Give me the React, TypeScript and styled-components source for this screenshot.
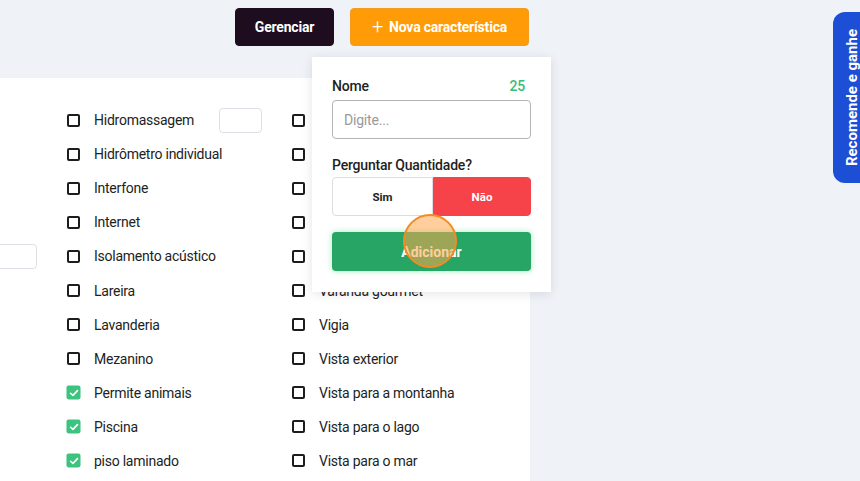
import React from "react";
import styled, { createGlobalStyle } from "styled-components";

const GlobalStyle = createGlobalStyle`
  html, body { margin: 0; padding: 0; }
  body {
    background: #eff2f7;
    font-family: Roboto, "Liberation Sans", Arial, sans-serif;
    overflow: hidden;
    color: #1f1c1f;
  }
  * { box-sizing: border-box; }
`;

const Page = styled.div`
  position: relative;
  width: 860px;
  height: 481px;
  overflow: hidden;
  display: flex;
  flex-direction: column;
`;

const TopBar = styled.div`
  height: 78px;
  flex: none;
  display: flex;
  align-items: flex-start;
  gap: 16px;
  padding: 8px 0 0 235px;
`;

const Button = styled.button<{ $variant: "dark" | "orange" }>`
  height: 38px;
  border-radius: 4px;
  font-family: inherit;
  font-size: 14px;
  font-weight: 700;
  letter-spacing: -0.2px;
  color: #fff;
  display: flex;
  align-items: center;
  justify-content: center;
  gap: 6px;
  cursor: pointer;
  border: 1px solid ${(p) => (p.$variant === "dark" ? "#1e0d1f" : "#f49a1e")};
  background: ${(p) => (p.$variant === "dark" ? "#1e0d1f" : "#ff9b07")};
  width: ${(p) => (p.$variant === "dark" ? "99px" : "179px")};
`;

const Plus = styled.span`
  font-size: 20px;
  font-weight: 300;
  line-height: 1;
  margin-top: -2px;
`;

const Body = styled.div`
  flex: 1;
  display: flex;
  min-height: 0;
`;

const Panel = styled.div`
  width: 530px;
  background: #fff;
  overflow: hidden;
  padding-top: 25px;
`;

const Grid = styled.div`
  margin-left: -158px;
  display: grid;
  grid-template-columns: repeat(3, 225px);
  grid-auto-flow: column;
  grid-template-rows: repeat(11, 34.1px);
`;

const Item = styled.div`
  display: grid;
  grid-template-columns: 13px 139px 43px;
  align-items: center;
  height: 34.1px;
`;

const Box = styled.span<{ $checked?: boolean }>`
  width: 13px;
  height: 13px;
  border-radius: 2px;
  border: ${(p) => (p.$checked ? "none" : "2px solid #1f1c1f")};
  background: ${(p) => (p.$checked ? "#3cc47f" : "#fff")};
  display: flex;
  align-items: center;
  justify-content: center;
  transform: ${(p) => (p.$checked ? "scale(1.08)" : "none")};
`;

const Label = styled.span`
  padding-left: 14px;
  font-size: 14px;
  letter-spacing: -0.25px;
  color: #221e22;
  white-space: nowrap;
`;

const Qty = styled.span`
  width: 43px;
  height: 25px;
  border: 1px solid #dcdfe4;
  border-radius: 4px;
  background: #fff;
`;

const Popover = styled.div`
  position: absolute;
  left: 312px;
  top: 57px;
  width: 239px;
  height: 235px;
  background: #fff;
  box-shadow: 0 2px 10px rgba(30, 40, 60, 0.12);
  padding: 20px;
  display: flex;
  flex-direction: column;
`;

const FieldHead = styled.div`
  display: flex;
  justify-content: space-between;
  align-items: center;
  height: 18px;
  font-size: 14px;
  letter-spacing: -0.2px;
  font-weight: 500;
  color: #221e22;
`;

const Count = styled.span`
  color: #38bd78;
  font-weight: 500;
  font-size: 14px;
  padding-right: 6px;
`;

const Input = styled.div`
  margin-top: 5px;
  height: 39px;
  border: 1px solid #b4b4b8;
  border-radius: 4px;
  display: flex;
  align-items: center;
  padding-left: 11px;
  font-size: 14px;
  letter-spacing: -0.2px;
  color: #9a9a9e;
`;

const Question = styled.div`
  margin-top: 17px;
  height: 18px;
  font-size: 14px;
  letter-spacing: -0.2px;
  font-weight: 500;
  color: #221e22;
  display: flex;
  align-items: center;
`;

const Toggle = styled.div`
  margin-top: 3px;
  height: 39px;
  display: grid;
  grid-template-columns: 101px 1fr;
`;

const ToggleOpt = styled.div<{ $active?: boolean }>`
  display: flex;
  align-items: center;
  justify-content: center;
  font-size: 11.5px;
  font-weight: 700;
  color: ${(p) => (p.$active ? "#fff" : "#221e22")};
  background: ${(p) => (p.$active ? "#f6434a" : "#fff")};
  border: 1px solid ${(p) => (p.$active ? "#f6434a" : "#dcdde0")};
  border-radius: ${(p) => (p.$active ? "0 4px 4px 0" : "4px 0 0 4px")};
`;

const AddButton = styled.div`
  margin-top: 16px;
  height: 39px;
  border-radius: 4px;
  background: #26a564;
  box-shadow: 0 0 6px rgba(60, 210, 120, 0.45);
  color: #fff;
  font-size: 14px;
  font-weight: 700;
  display: flex;
  align-items: center;
  justify-content: center;
`;

const Cursor = styled.div`
  position: absolute;
  left: 403px;
  top: 214px;
  width: 54px;
  height: 54px;
  border-radius: 50%;
  background: rgba(255, 166, 74, 0.55);
  border: 2px solid #f28b25;
`;

const ReferTab = styled.div`
  position: absolute;
  left: 833px;
  top: 12px;
  width: 40px;
  height: 171px;
  background: #1c4fd6;
  border-radius: 12px 0 0 12px;
  display: flex;
  align-items: center;
  padding-left: 12px;
`;

const ReferText = styled.span`
  writing-mode: vertical-rl;
  transform: rotate(180deg);
  color: #fff;
  font-size: 15px;
  font-weight: 700;
  line-height: 15px;
  white-space: nowrap;
`;

type Feature = { label: string; checked?: boolean; qty?: boolean };

const hiddenColumn: Feature[] = Array.from({ length: 11 }, (_, i) => ({
  label: "",
  qty: i === 4,
}));

const columns: Feature[][] = [
  hiddenColumn,
  [
    { label: "Hidromassagem", qty: true },
    { label: "Hidrômetro individual" },
    { label: "Interfone" },
    { label: "Internet" },
    { label: "Isolamento acústico" },
    { label: "Lareira" },
    { label: "Lavanderia" },
    { label: "Mezanino" },
    { label: "Permite animais", checked: true },
    { label: "Piscina", checked: true },
    { label: "piso laminado", checked: true },
  ],
  [
    { label: "Playground" },
    { label: "Portaria" },
    { label: "Quintal" },
    { label: "Sauna" },
    { label: "Terraço" },
    { label: "Varanda gourmet" },
    { label: "Vigia" },
    { label: "Vista exterior" },
    { label: "Vista para a montanha" },
    { label: "Vista para o lago" },
    { label: "Vista para o mar" },
  ],
];

const Check = () => (
  <svg width="10" height="10" viewBox="0 0 10 10" fill="none">
    <path d="M1.8 5.2 L4 7.2 L8.2 2.8" stroke="#fff" strokeWidth="1.5" strokeLinecap="round" strokeLinejoin="round" />
  </svg>
);

export default function App() {
  return (
    <Page>
      <GlobalStyle />
      <TopBar>
        <Button $variant="dark">Gerenciar</Button>
        <Button $variant="orange">
          <Plus>+</Plus>
          Nova característica
        </Button>
      </TopBar>
      <Body>
        <Panel>
          <Grid>
            {columns.flat().map((f, i) => (
              <Item key={i}>
                <Box $checked={f.checked}>{f.checked && <Check />}</Box>
                <Label>{f.label}</Label>
                {f.qty ? <Qty /> : <span />}
              </Item>
            ))}
          </Grid>
        </Panel>
      </Body>
      <Popover>
        <FieldHead>
          <span>Nome</span>
          <Count>25</Count>
        </FieldHead>
        <Input>Digite...</Input>
        <Question>Perguntar Quantidade?</Question>
        <Toggle>
          <ToggleOpt>Sim</ToggleOpt>
          <ToggleOpt $active>Não</ToggleOpt>
        </Toggle>
        <AddButton>Adicionar</AddButton>
      </Popover>
      <Cursor />
      <ReferTab>
        <ReferText>Recomende e ganhe</ReferText>
      </ReferTab>
    </Page>
  );
}
